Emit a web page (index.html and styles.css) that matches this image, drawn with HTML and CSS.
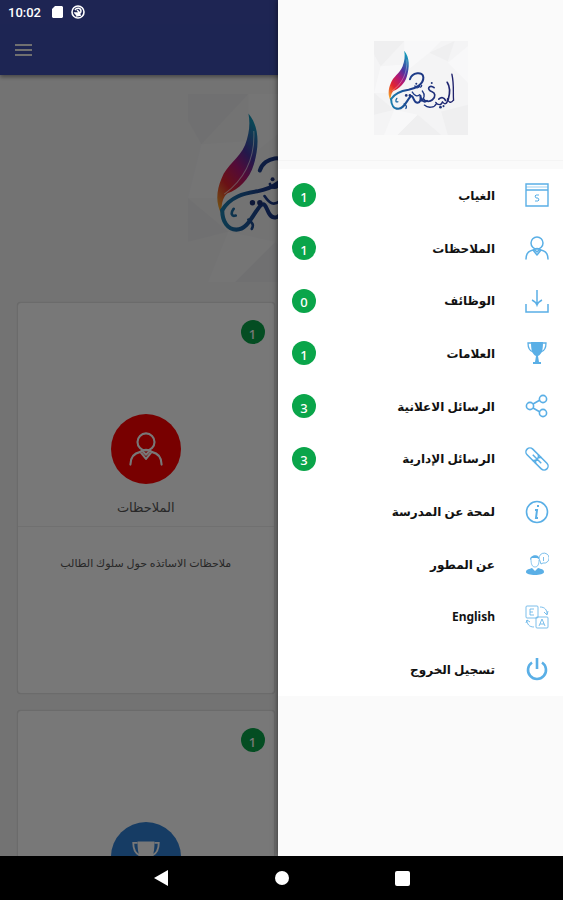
FILE: index.html
```
<!DOCTYPE html>
<html lang="ar">
<head>
    <meta charset="UTF-8">
    <meta name="viewport" content="width=device-width, initial-scale=1">
    <title>المسعودية</title>
    <link rel="stylesheet" href="styles.css">
</head>
<body>
    <!-- shared drawings -->
    <svg class="defs" width="0" height="0">
        <defs>
            <linearGradient id="feather" x1="0.7" y1="0" x2="0.2" y2="1">
                <stop offset="0" stop-color="#1596b8"/>
                <stop offset="0.3" stop-color="#4b34a0"/>
                <stop offset="0.5" stop-color="#b01878"/>
                <stop offset="0.75" stop-color="#e2252e"/>
                <stop offset="1" stop-color="#f2a02c"/>
            </linearGradient>
            <linearGradient id="ink" gradientUnits="userSpaceOnUse" x1="90" y1="0" x2="285" y2="0">
                <stop offset="0" stop-color="#1c7fae"/>
                <stop offset="0.3" stop-color="#1d3f8c"/>
                <stop offset="1" stop-color="#20206a"/>
            </linearGradient>
        </defs>
        <symbol id="logo" viewBox="40 35 280 280">
            <path fill="#f4f4f5" d="M40 35h280v280H40z"/>
            <path fill="#efeff0" d="M40 35h90L60 110 40 75zM205 70l75-35-20 60zM40 190l60 50-60 15zM240 245l80-20v90h-60zM110 315l60-60 70 60z"/>
            <path fill="#f8f8f9" d="M130 35h110l-35 35-75 60zM60 110l70-5-40 85-50 0zM260 100l60-50v110zM100 240l70 15-60 60H70z"/>
            <path fill="url(#feather)" d="M130 64c17 20 16 50 8 76-6 22-24 38-39 43-7 5-10 17-9 31-9-16-8-35 0-53 7-20 26-29 35-50 6-16 8-31 5-47z"/>
            <path fill="none" stroke="#fff" stroke-opacity=".6" stroke-width="1.5" d="M138 90c2 40-14 72-44 94"/>
            <g fill="none" stroke="url(#ink)" stroke-linecap="round" stroke-linejoin="round">
                <path stroke-width="6" d="M91 208c12-20 32-25 52-28 22-4 45-16 44-37-1-19-34-15-40 6"/>
                <path stroke-width="6" d="M91 208c0 17 8 29 21 29 17 0 24-22 36-36 11-9 8 19 22 18 9-1 10-12 8-21 2 16 12 21 20 15"/>
                <path stroke-width="4" d="M108 206c-5 7-3 12 3 10M162 169c2 8 12 7 12 0 3 5 8 4 8-2M154 187c8 12 14 14 22 8M184 184c9 11 6 24-4 30M272 134c7 30 3 55 5 78M276 212c-7 10-16 5-17-5 1 14-8 20-15 9-3 12-15 10-20 2M190 226c11 10 31 8 36-5M130 222c7 6 8 8 5 14"/>
                <path stroke-width="5" d="M258 158c10 15 8 35 3 52M219 174c-14-12-25 6-6 12 9 3 12 15 1 24-9 8-24 5-27-4"/>
                <path stroke-width="5" d="M233 208c8-7 16-5 20 4"/>
            </g>
            <g fill="#1f3479">
                <circle cx="136" cy="197" r="4"/>
                <circle cx="147" cy="197" r="4"/>
                <circle cx="166" cy="162" r="3"/>
                <circle cx="238" cy="232" r="4"/>
                <circle cx="247" cy="229" r="3"/>
                <circle cx="212" cy="160" r="3"/>
            </g>
        </symbol>
        <symbol id="person" viewBox="0 0 24 24">
            <g fill="none" stroke="currentColor" stroke-width="1.5" stroke-linejoin="round" stroke-linecap="round">
                <circle cx="12" cy="7" r="6"/>
                <path d="M1 23c0-5 2-8 7-9l4 5 4-5c5 1 7 4 7 9M8 14c2-2 6-2 8 0M10 14l2 2 2-2"/>
            </g>
        </symbol>
        <symbol id="cup" viewBox="0 0 24 24">
            <path fill="currentColor" d="M6 1h12c0 8-1 12-5 14l1 6h2v2H8v-2h2l1-6C7 13 6 9 6 1z"/>
            <path fill="none" stroke="currentColor" stroke-width="1.3" d="M6 2H3c0 6 2 8 5 9M18 2h3c0 6-2 8-5 9"/>
        </symbol>
    </svg>

    <div class="screen">
        <div class="status">
            <span>10:02</span>
            <svg width="12" height="12" viewBox="0 0 12 12"><path fill="#fff" d="M4 0h7l1 1v10l-1 1H2l-1-1V3z"/></svg>
            <svg width="14" height="14" viewBox="0 0 14 14" fill="none" stroke="#fff"><circle cx="7" cy="7" r="6" stroke-width="1.6"/><path stroke-width="1.5" d="M4 5c2-3 6-2 6 1s-4 5-6 2h4M6 5l3 3M5 11l5-1"/></svg>
        </div>
        <header class="toolbar">
            <button class="menu-btn" aria-label="القائمة"><i></i><i></i><i></i></button>
        </header>
        <main>
            <svg class="banner"><use href="#logo"/></svg>
            <div class="cards">
                <article class="card" dir="rtl">
                    <div class="card-top">
                        <span class="badge">1</span>
                        <div class="circle red"><svg width="34" height="34"><use href="#person"/></svg></div>
                        <h2>الملاحظات</h2>
                    </div>
                    <p>ملاحظات الاساتذه حول سلوك الطالب</p>
                </article>
                <article class="card" dir="rtl">
                    <div class="card-top">
                        <span class="badge">1</span>
                        <div class="circle blue"><svg width="34" height="34"><use href="#cup"/></svg></div>
                    </div>
                </article>
            </div>
        </main>
        <div class="scrim"></div>

        <aside class="drawer" dir="rtl">
            <div class="drawer-head">
                <svg class="drawer-logo"><use href="#logo"/></svg>
            </div>
            <nav>
                <ul>
                    <li><a href="#">
                        <svg class="icon" viewBox="0 0 24 24" fill="none" stroke="currentColor" stroke-width="1.4"><path d="M1 1h22v22H1zM1 7h22"/><path stroke-width=".6" d="M1 4h22"/><path stroke-width="1" d="M14 12h-3l-1 1 1 2h2l1 2-1 1h-3"/></svg>
                        <span>الغياب</span><b class="badge">1</b>
                    </a></li>
                    <li><a href="#">
                        <svg class="icon"><use href="#person"/></svg>
                        <span>الملاحظات</span><b class="badge">1</b>
                    </a></li>
                    <li><a href="#">
                        <svg class="icon" viewBox="0 0 24 24" fill="none" stroke="currentColor" stroke-width="1.5"><path d="M1 15v8h22v-8M7 11c2 1 4 2 5 5 1-3 3-4 5-5M12 1v15"/></svg>
                        <span>الوظائف</span><b class="badge">0</b>
                    </a></li>
                    <li><a href="#">
                        <svg class="icon"><use href="#cup"/></svg>
                        <span>العلامات</span><b class="badge">1</b>
                    </a></li>
                    <li><a href="#">
                        <svg class="icon" viewBox="0 0 24 24" fill="none" stroke="currentColor" stroke-width="1.6"><circle cx="5" cy="12" r="3.600"/><circle cx="18" cy="5" r="3.600"/><circle cx="18" cy="19" r="3.600"/><path d="M8 10l7-4M8 14l7 4"/></svg>
                        <span>الرسائل الاعلانية</span><b class="badge">3</b>
                    </a></li>
                    <li><a href="#">
                        <svg class="icon" viewBox="0 0 24 24" fill="none" stroke="currentColor" stroke-width="1.5"><g transform="rotate(45 12 12)"><rect x="-2" y="8" width="28" height="8" rx="4"/><path d="M10 8c3 2 3 6 0 8M14 8c-3 2-3 6 0 8M6 12h12"/></g></svg>
                        <span>الرسائل الإدارية</span><b class="badge">3</b>
                    </a></li>
                    <li><a href="#">
                        <svg class="icon" viewBox="0 0 24 24" fill="none" stroke="currentColor" stroke-width="1.6"><circle cx="12" cy="12" r="10.500"/><path d="M10 10h2l-1 8h2M12 6h2" stroke-width="2"/></svg>
                        <span>لمحة عن المدرسة</span>
                    </a></li>
                    <li><a href="#">
                        <svg class="icon" viewBox="0 0 24 24" fill="none" stroke="currentColor"><path fill="currentColor" stroke="none" d="M1 20c0-3 4-3 6-4l3 3 3-3c3 1 6 1 6 4 0 4-18 4-18 0zM5 8c0-6 10-6 9-1l-2-1H7z"/><path d="M6 7c0 5 1 8 4 8s4-3 4-7" stroke-width=".7"/><path d="M15 9a5 5 0 1 1 3 2l-2 1zM18.500 5v4" stroke-width=".8"/></svg>
                        <span>عن المطور</span>
                    </a></li>
                    <li><a href="#">
                        <svg class="icon" viewBox="0 0 24 24" fill="none" stroke="currentColor" stroke-width=".8"><rect x="1" y="1" width="12" height="12" rx="1"/><rect x="11" y="12" width="12" height="11" rx="1"/><path d="M9 4H5v6h4M5 7h3M14 21l3-7 3 7M15 19h4M15 2c5 0 7 3 7 7M19 7l3 3 1-4M9 22c-5 0-7-3-7-7M1 18l1-3 3 2"/></svg>
                        <span>English</span>
                    </a></li>
                    <li><a href="#">
                        <svg class="icon" viewBox="0 0 24 24" fill="none" stroke="currentColor" stroke-width="2.600"><path d="M7 4.500a9 9 0 1 0 10 0M12 0v11"/></svg>
                        <span>تسجيل الخروج</span>
                    </a></li>
                </ul>
            </nav>
        </aside>
    </div>

    <div class="navbar">
        <button aria-label="رجوع"><svg width="16" height="16" viewBox="0 0 16 16"><path fill="#fff" d="M14 0v16L0 8z"/></svg></button>
        <button aria-label="الرئيسية"><svg width="16" height="16" viewBox="0 0 16 16"><circle fill="#fff" cx="8" cy="8" r="7"/></svg></button>
        <button aria-label="التطبيقات"><svg width="16" height="16" viewBox="0 0 16 16"><rect fill="#fff" x="1" y="1" width="15" height="15" rx="2"/></svg></button>
    </div>
</body>
</html>
```
FILE: styles.css
```
* {
    box-sizing: border-box;
}
body {
    margin: 0;
    height: 100vh;
    display: flex;
    flex-direction: column;
    background: #000;
    font-family: "Noto Sans", "DejaVu Sans", sans-serif;
}
.defs {
    position: absolute;
}
button {
    background: none;
    border: none;
    padding: 0;
    cursor: pointer;
}
.screen {
    flex: 1;
    min-height: 0;
    position: relative;
    overflow: hidden;
    background: #f5f5f5;
}

/* top bars */
.status {
    position: relative;
    z-index: 2;
    height: 24px;
    padding: 0 8px;
    display: flex;
    align-items: center;
    gap: 8px;
    background: #1e2553;
    color: #fff;
    font-family: Roboto, sans-serif;
    font-size: 13px;
    font-weight: 500;
}
.status span {
    margin-right: 2px;
}
.toolbar {
    height: 51px;
    padding: 0 15px;
    display: flex;
    align-items: center;
    background: #3f4fb1;
    box-shadow: 0 2px 4px rgba(0, 0, 0, 0.4);
}
.menu-btn {
    width: 17px;
    display: grid;
    gap: 3px;
}
.menu-btn i {
    height: 2px;
    background: #eee;
}

/* page under the drawer */
.banner {
    display: block;
    width: 188px;
    height: 188px;
    margin: 19px auto 20px;
}
.cards {
    display: grid;
    grid-template-columns: 1fr;
    gap: 16px;
    width: 50%;
    padding: 0 7px 0 17px;
}
.card {
    height: 392px;
    background: #fff;
    border: 1px solid #e4e4e4;
    border-radius: 4px;
    box-shadow: 0 0 1px rgba(0, 0, 0, 0.2);
    text-align: center;
    color: #555;
}
.card-top {
    height: 224px;
    padding: 17px 9px 0;
    border-bottom: 1px solid #eee;
}
.badge {
    display: flex;
    align-items: center;
    justify-content: center;
    width: 24px;
    height: 24px;
    padding-top: 3px;
    border-radius: 50%;
    background: #0aa54a;
    color: #fff;
    font-size: 13px;
    font-weight: 500;
}
.circle {
    width: 70px;
    height: 70px;
    margin: 70px auto 11px;
    display: flex;
    align-items: center;
    justify-content: center;
    border-radius: 50%;
    color: #fff;
}
.red {
    background: #ff0000;
}
.blue {
    background: #3080d4;
}
.card h2 {
    margin: 0;
    font-size: 13px;
    font-weight: normal;
    line-height: 24px;
}
.card p {
    margin: 24px 0 0;
    font-size: 11px;
    line-height: 24px;
}
.scrim {
    position: absolute;
    inset: 0;
    background: rgba(0, 0, 0, 0.53);
}

/* drawer */
.drawer {
    position: absolute;
    z-index: 3;
    top: 0;
    right: 0;
    bottom: 0;
    width: 285px;
    background: #fafafa;
    box-shadow: 0 0 6px rgba(0, 0, 0, 0.6);
}
.drawer-head {
    height: 161px;
    padding-top: 41px;
    border-bottom: 1px solid #f4f4f4;
}
.drawer-logo {
    display: block;
    width: 94px;
    height: 94px;
    margin: 0 auto;
}
.drawer ul {
    list-style: none;
    margin: 8px 0 0;
    padding: 0;
    min-height: 527px;
    display: grid;
    grid-auto-rows: 1fr;
    background: #fff;
}
.drawer a {
    height: 100%;
    padding: 0 14px;
    display: flex;
    align-items: center;
    color: #111;
    text-decoration: none;
    font-size: 12px;
    font-weight: bold;
}
.icon {
    width: 24px;
    height: 24px;
    margin-left: 30px;
    color: #5aafe6;
}
.drawer a span {
    flex: 1;
}

/* system buttons */
.navbar {
    height: 44px;
    display: flex;
    align-items: center;
    justify-content: center;
    gap: 104px;
}
.navbar button {
    height: 16px;
}
.navbar svg {
    display: block;
}
```
